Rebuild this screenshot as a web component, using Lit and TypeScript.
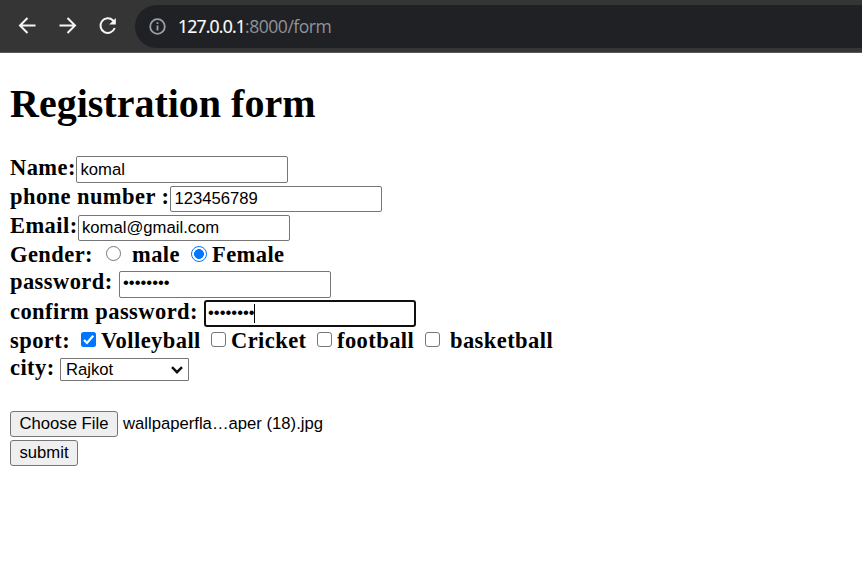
import { LitElement, html, css, svg } from "lit";
import { customElement } from "lit/decorators.js";

@customElement("browser-bar")
class BrowserBar extends LitElement {
  static styles = css`
    :host { display: flex; box-sizing: border-box; height: 53px; padding: 5px 0 0 15px; background: #353535; border-bottom: 1px solid #5a5859; }
    .nav { width: 24px; height: 24px; margin: 9px 16px 0 0; fill: none; stroke: #f5f5f5; stroke-width: 2; }
    .address { flex: 1; display: flex; align-items: center; height: 43px; box-sizing: border-box; background: #202124; border-radius: 22px 0 0 22px; padding-left: 14px; white-space: pre; font: 17.6px/24px "Open Sans", "Noto Sans", sans-serif; color: #8f9398; }
    .info { width: 17px; height: 17px; margin-right: 12px; fill: none; stroke: #9aa0a6; stroke-width: 1.8; flex: none; }
    .host { color: #fff; letter-spacing: -0.8px; -webkit-text-stroke: 0.2px #fff; padding-bottom: 1px; }
    .path { letter-spacing: -0.5px; padding-bottom: 1px; }
  `;
  render() {
    return html`
      <svg class="nav" viewBox="0 0 24 24">${svg`<path d="M20.5 11.5H5M12.5 4L5 11.5L12.5 19"/>`}</svg>
      <svg class="nav" viewBox="0 0 24 24">${svg`<path d="M4.5 11.5H20M12.5 4L20 11.5L12.5 19"/>`}</svg>
      <svg class="nav" viewBox="0 0 24 24">${svg`<path d="M19.7 14A7.3 7.3 0 1 1 18 6.5L20 8.5"/><path d="M20.8 4V10.6H14.2Z" fill="#f5f5f5" stroke="none"/>`}</svg>
      <div class="address">
        <svg class="info" viewBox="0 0 17 17">${svg`<circle cx="8.5" cy="8.5" r="7.3"/><path d="M8.5 7.4V12.6M8.5 4.2V6"/>`}</svg>
        <span class="host">127.0.0.1</span><span class="path">:8000/form</span>
      </div>
    `;
  }
}

@customElement("app-root")
class AppRoot extends LitElement {
  static styles = css`
    :host { display: block; height: 585px; overflow: hidden; background: #fff; color: #000; }
    .page { padding: 0 10px; }
    h1 { margin: 28px 0 29px; font: bold 40px/46px "Liberation Serif", serif; white-space: nowrap; }
    .row { display: flex; height: 29px; font: bold 22.5px/23px "Liberation Serif", serif; letter-spacing: 0.43px; white-space: nowrap; }
    .tight { height: 28px; }
    .text, .select, .button, .file { box-sizing: border-box; font: 16.67px/19px "Liberation Sans", Arial, sans-serif; letter-spacing: 0; color: #000; }
    .label { flex: none; }
    .name { width: 66px; } .phone { width: 160px; } .email { width: 68px; }
    .pass { width: 109px; margin-top: -1px; } .confirm { width: 194px; } .city { width: 50px; }
    .gender { width: 95px; } .male { width: 60px; } .sport { width: 71px; }
    .volley { width: 110px; } .cricket { width: 86px; } .football { width: 88px; }
    .text { appearance: none; width: 212px; height: 27px; margin: 0; padding: 2px 3px 1px 3.5px; border: 1px solid #767676; border-radius: 2px; outline: none; background: #fff; }
    .short { height: 26px; margin-top: 1px; padding: 1px 3px 2px 3.5px; }
    .short.mail { padding-left: 3px; }
    .secret { padding: 0 3px 3px; }
    .focused { position: relative; height: 27px; }
    .focused .text { border: 2px solid #101010; border-radius: 3px; padding: 0 2px 1px; display: block; }
    .caret { position: absolute; left: 50px; top: 4px; width: 1px; height: 19px; background: #000; }
    .radio, .check { appearance: none; box-sizing: border-box; flex: none; width: 15px; height: 15px; margin: 4px 5px 0 0; border: 1px solid #767676; background: #fff; }
    .radio { border-radius: 50%; margin: 3px 11px 0 1px; }
    .radio.on { width: 16px; height: 16px; margin: 3px 5px 0 -1px; border: 1.5px solid #0075ff; background: radial-gradient(circle, #0075ff 4.6px, #fff 5.2px); }
    .check { border-radius: 3px; }
    .wide { margin-right: 10px; }
    .sports { line-height: 25px; }
    .tick { flex: none; width: 15px; height: 15px; margin: 4px 5px 0 0; }
    .select { display: flex; align-items: center; justify-content: space-between; width: 129px; height: 23px; margin-top: 2px; border: 1px solid #767676; border-radius: 1px; padding: 0 5px; background: #fff; }
    .arrow { width: 12px; height: 8px; fill: none; stroke: #101010; stroke-width: 2.4; }
    .upload { height: 29px; display: flex; }
    .button { display: flex; align-items: center; justify-content: center; margin: 0; padding: 0 0 2px; width: 108px; height: 26px; border: 1px solid #767676; border-radius: 3px; background: #efefef; }
    .submit { width: 68px; }
    .file { margin: 3px 0 0 5px; white-space: nowrap; }
    .gap { height: 26px; }
  `;
  render() {
    return html`
      <browser-bar></browser-bar>
      <main class="page">
        <h1>Registration form</h1>
        <div class="row"><span class="label name">Name:</span><input class="text" .value=${"komal"}></div>
        <div class="row"><span class="label phone">phone number :</span><input class="text short" .value=${"123456789"}></div>
        <div class="row"><span class="label email">Email:</span><input class="text short mail" .value=${"komal@gmail.com"}></div>
        <div class="row tight">
          <span class="label gender">Gender:</span><input class="radio" type="radio"><span class="label male">male</span
          ><input class="radio on" type="radio"><span>Female</span>
        </div>
        <div class="row"><span class="label pass">password:</span><input class="text secret" type="password" .value=${"password"}></div>
        <div class="row tight"><span class="label confirm">confirm password:</span><div class="focused"><input class="text" type="password" .value=${"password"}><i class="caret"></i></div></div>
        <div class="row tight sports">
          <span class="label sport">sport:</span>
          <svg class="tick" viewBox="0 0 15 15">${svg`<rect width="15" height="15" rx="2.5" fill="#0075ff"/><path d="M3 8L6 11L12.2 3.8" fill="none" stroke="#fff" stroke-width="2.2"/>`}</svg>
          <span class="label volley">Volleyball</span>
          <input class="check" type="checkbox"><span class="label cricket">Cricket</span>
          <input class="check" type="checkbox"><span class="label football">football</span>
          <input class="check wide" type="checkbox"><span>basketball</span>
        </div>
        <div class="row">
          <span class="label city">city:</span>
          <div class="select">Rajkot<svg class="arrow" viewBox="0 0 12 8">${svg`<path d="M1 1.2L6 6.2L11 1.2"/>`}</svg></div>
        </div>
        <div class="gap"></div>
        <div class="upload"><button class="button">Choose File</button><span class="file">wallpaperfla…aper (18).jpg</span></div>
        <button class="button submit">submit</button>
      </main>
    `;
  }
}
